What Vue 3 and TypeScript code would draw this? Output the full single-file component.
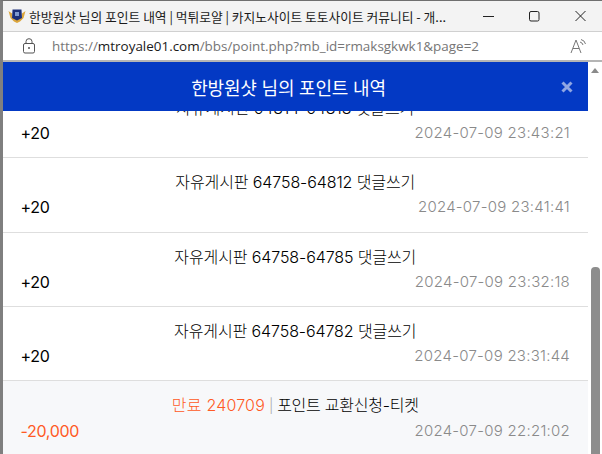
<script setup lang="ts">
interface Row { title: string; point: string; date: string; minus?: boolean; prefix?: string }
const rows: Row[] = [
  { title: '자유게시판 64814-64818 댓글쓰기', point: '+20', date: '2024-07-09 23:43:21' },
  { title: '자유게시판 64758-64812 댓글쓰기', point: '+20', date: '2024-07-09 23:41:41' },
  { title: '자유게시판 64758-64785 댓글쓰기', point: '+20', date: '2024-07-09 23:32:18' },
  { title: '자유게시판 64758-64782 댓글쓰기', point: '+20', date: '2024-07-09 23:31:44' },
  { title: '포인트 교환신청-티켓', prefix: '만료 240709', point: '-20,000', date: '2024-07-09 22:21:02', minus: true },
]
</script>

<template>
  <div class="win">
    <div class="titlebar">
      <svg class="favicon" width="18" height="16" viewBox="0 0 18 16">
        <path d="M0.5 3 L2.5 10 L6 13.5 L9 15 L12 13.5 L15.5 10 L17.5 3 L14 5.5 V10 H4 V5.5 Z" fill="#dca63c" />
        <path d="M4.5 1.5 H13.5 L14 10 L9 12.5 L4 10 Z" fill="#1c2f78" />
        <rect x="7" y="4" width="4" height="4" fill="#7f9ad0" />
      </svg>
      <span class="wintitle">한방원샷 님의 포인트 내역 | 먹튀로얄 | 카지노사이트 토토사이트 커뮤니티 - 개...</span>
      <div class="controls">
        <svg width="11" height="12" viewBox="0 0 11 12"><path d="M0 6.5 H11" stroke="#222" stroke-width="1" /></svg>
        <svg width="11" height="12" viewBox="0 0 11 12"><rect x="0.5" y="1.5" width="9.5" height="9.5" rx="1.5" fill="none" stroke="#222" /></svg>
        <svg width="11" height="12" viewBox="0 0 11 12"><path d="M0.5 1 L10.5 11 M10.5 1 L0.5 11" stroke="#222" stroke-width="1" /></svg>
      </div>
    </div>
    <div class="addressbar">
      <svg class="lock" width="14" height="16" viewBox="0 0 14 16">
        <rect x="1.5" y="5.5" width="11" height="9.5" rx="1.5" fill="none" stroke="#555" />
        <path d="M4 5.5 V3.5 A3 2.8 0 0 1 10 3.5 V5.5" fill="none" stroke="#555" />
        <circle cx="7" cy="10" r="1" fill="#555" />
      </svg>
      <span class="url"><span class="dim">https://</span>mtroyale01.com<span class="dim">/bbs/point.php?mb_id=rmaksgkwk1&amp;page=2</span></span>
      <svg class="read" width="18" height="16" viewBox="0 0 18 16">
        <path d="M1 15 L6 2 L11 15 M3 10.5 H9" fill="none" stroke="#777" stroke-width="1" />
        <path d="M10 4 A4 4 0 0 1 13 7 M11 1.5 A6 6 0 0 1 15.5 6" fill="none" stroke="#777" stroke-width="1" />
      </svg>
    </div>
    <div class="page">
      <div class="content">
        <header class="modalhead">
          <h1>한방원샷 님의 포인트 내역</h1>
          <svg class="close" width="12" height="12" viewBox="0 0 12 12"><path d="M1.5 1.5 L10.5 10.5 M10.5 1.5 L1.5 10.5" stroke="#8fa6e3" stroke-width="3" /></svg>
        </header>
        <div class="viewport">
          <ul class="list">
            <li v-for="r in rows" :key="r.date" class="row" :class="{ minus: r.minus }">
              <div class="rowtitle">
                <template v-if="r.prefix"><span class="prefix">{{ r.prefix }}</span><span class="bar">|</span></template>{{ r.title }}
              </div>
              <div class="rowmeta">
                <span class="point">{{ r.point }}</span>
                <span class="date">{{ r.date }}</span>
              </div>
            </li>
          </ul>
        </div>
      </div>
      <div class="scrollbar">
        <span class="arrow"></span>
        <span class="thumb"></span>
      </div>
    </div>
  </div>
</template>

<style>
html, body { margin: 0; padding: 0; overflow: hidden; }
</style>

<style scoped>
.win {
  width: 602px;
  height: 454px;
  box-sizing: border-box;
  border-top: 1px solid #6f6f6f;
  border-left: 3px solid #7f7f7f;
  display: flex;
  flex-direction: column;
  overflow: hidden;
  background: #fff;
  font-family: Inter, "Noto Sans CJK KR", sans-serif;
}
.titlebar {
  height: 30px;
  flex: none;
  background: #f3f3f3;
  display: flex;
  align-items: center;
  padding-left: 5px;
  box-sizing: border-box;
}
.favicon { flex: none; }
.wintitle {
  margin-left: 3px;
  font-family: "Noto Sans CJK KR", sans-serif;
  font-size: 12.75px;
  color: #1a1a1a;
  white-space: nowrap;
  width: 426px;
  overflow: hidden;
}
.controls {
  display: flex;
  gap: 35px;
  margin-left: 28px;
  align-items: center;
}
.addressbar {
  height: 31px;
  flex: none;
  box-sizing: border-box;
  border-bottom: 2px solid #b5b5b5;
  border-top: 1px solid #d0d0d0;
  background: #fff;
  display: flex;
  align-items: center;
  padding-left: 19px;
  padding-right: 14px;
}
.lock { flex: none; }
.url {
  margin-left: 16px;
  font-family: "Open Sans", sans-serif;
  font-size: 13.45px;
  color: #1a1a1a;
  flex: 1;
  white-space: nowrap;
}
.dim { color: #767676; }
.read { flex: none; }
.page {
  flex: 1;
  min-height: 0;
  display: flex;
}
.content {
  flex: 1;
  min-width: 0;
  display: flex;
  flex-direction: column;
}
.modalhead {
  height: 49px;
  flex: none;
  box-sizing: border-box;
  padding-right: 14px;
  background: #0339c4;
  color: #fff;
  display: flex;
  align-items: center;
  justify-content: center;
  position: relative;
}
.modalhead h1 {
  margin: 0;
  font-size: 18px;
  font-weight: 400;
  letter-spacing: -0.2px;
}
.close {
  position: absolute;
  right: 15px;
  top: 19px;
}
.viewport {
  flex: 1;
  min-height: 0;
  overflow: hidden;
}
.list {
  list-style: none;
  margin: -27px 0 0;
  padding: 0;
}
.row {
  height: 74.25px;
  box-sizing: border-box;
  border-bottom: 1px solid #dedede;
  padding: 14px 18px 0 17.5px;
  color: #000;
  font-size: 16px;
  font-weight: 300;
}
.row.minus {
  background: #f7f8fa;
}
.rowtitle {
  text-align: center;
  line-height: 20px;
  letter-spacing: -0.1px;
}
.minus .rowtitle { letter-spacing: -0.25px; }
.rowmeta {
  display: flex;
  justify-content: space-between;
  align-items: center;
  line-height: 20px;
  margin-top: 5px;
}
.point { font-weight: 400; letter-spacing: -0.3px; }
.date { color: #8a8a8a; font-size: 15px; letter-spacing: 0.25px; }
.minus .point, .prefix { color: #ff5a25; }
.prefix { letter-spacing: 0.2px; }
.bar { color: #aaa; margin: 0 4px; font-size: 14px; }
.scrollbar {
  width: 14px;
  flex: none;
  background: #fff;
  position: relative;
}
.arrow {
  position: absolute;
  top: 6px;
  left: 3px;
  width: 0;
  height: 0;
  border-left: 4.5px solid transparent;
  border-right: 4.5px solid transparent;
  border-bottom: 5px solid #8a8a8a;
}
.thumb {
  position: absolute;
  left: 3px;
  right: 2px;
  top: 205px;
  bottom: 0;
  background: #8d8d8d;
  border-radius: 4px 4px 0 0;
}
</style>
